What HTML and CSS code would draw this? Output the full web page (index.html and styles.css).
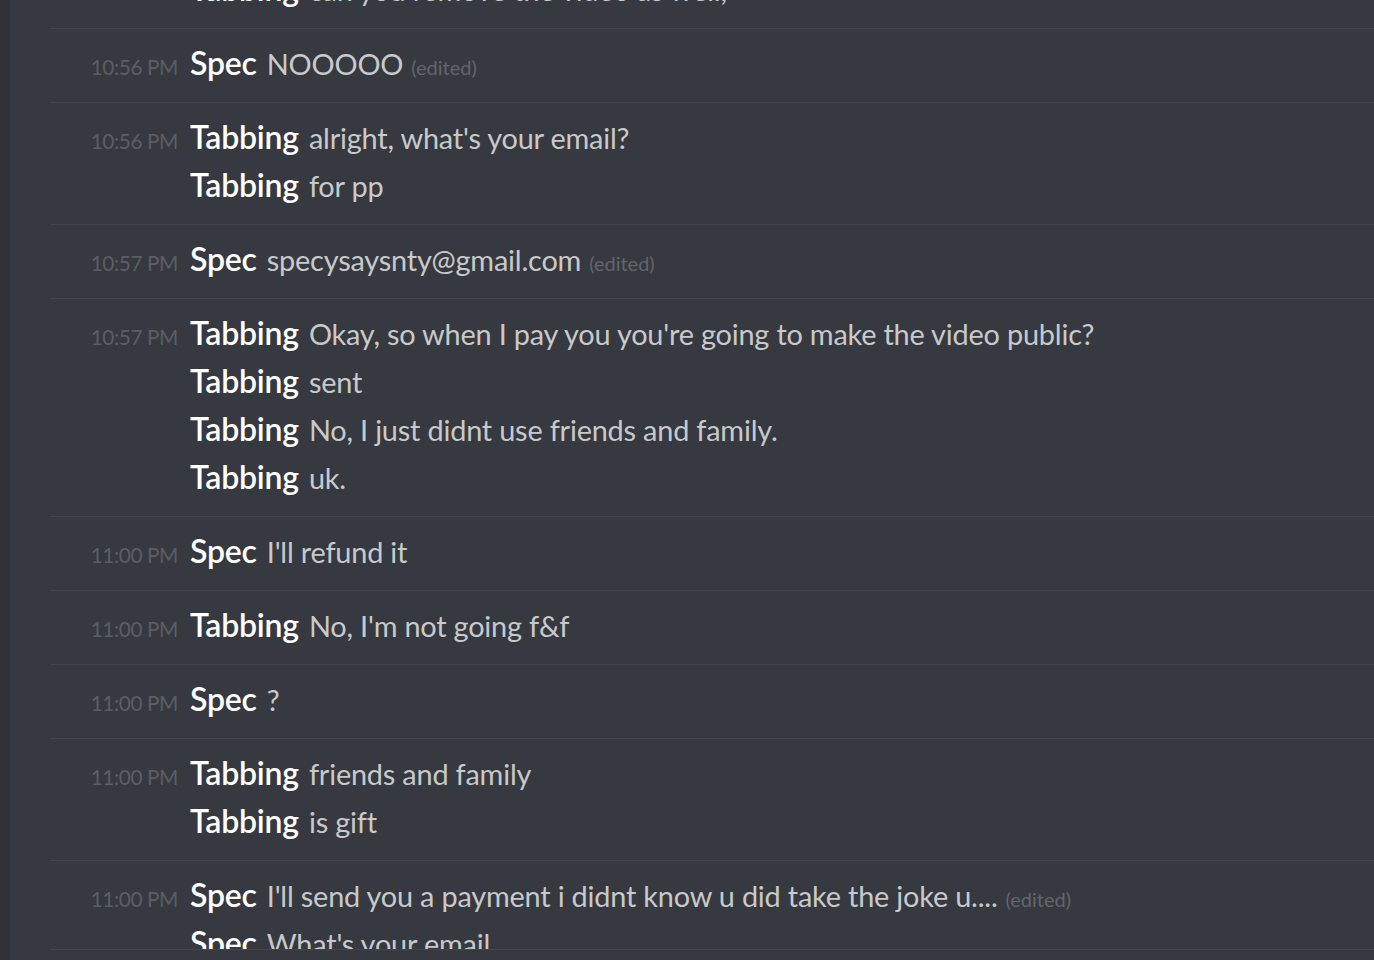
FILE: index.html
```html
<!DOCTYPE html>
<html>
<head>
<meta charset="utf-8">
<link rel="stylesheet" href="styles.css">
</head>
<body>
<div class="rail"></div>
<main class="chat">
  <section class="group">
    <div class="line"><span class="time"></span><span class="name">Tabbing</span><span class="text">can you remove the video as well,</span></div>
  </section>
  <section class="group">
    <div class="line"><span class="time">10:56 PM</span><span class="name">Spec</span><span class="text">NOOOOO</span><span class="edited">(edited)</span></div>
  </section>
  <section class="group">
    <div class="line"><span class="time">10:56 PM</span><span class="name">Tabbing</span><span class="text">alright, what's your email?</span></div>
    <div class="line"><span class="time"></span><span class="name">Tabbing</span><span class="text">for pp</span></div>
  </section>
  <section class="group">
    <div class="line"><span class="time">10:57 PM</span><span class="name">Spec</span><span class="text">specysaysnty@gmail.com</span><span class="edited">(edited)</span></div>
  </section>
  <section class="group">
    <div class="line"><span class="time">10:57 PM</span><span class="name">Tabbing</span><span class="text">Okay, so when I pay you you're going to make the video public?</span></div>
    <div class="line"><span class="time"></span><span class="name">Tabbing</span><span class="text">sent</span></div>
    <div class="line"><span class="time"></span><span class="name">Tabbing</span><span class="text">No, I just didnt use friends and family.</span></div>
    <div class="line"><span class="time"></span><span class="name">Tabbing</span><span class="text">uk.</span></div>
  </section>
  <section class="group">
    <div class="line"><span class="time">11:00 PM</span><span class="name">Spec</span><span class="text">I'll refund it</span></div>
  </section>
  <section class="group">
    <div class="line"><span class="time">11:00 PM</span><span class="name">Tabbing</span><span class="text">No, I'm not going f&amp;f</span></div>
  </section>
  <section class="group">
    <div class="line"><span class="time">11:00 PM</span><span class="name">Spec</span><span class="text">?</span></div>
  </section>
  <section class="group">
    <div class="line"><span class="time">11:00 PM</span><span class="name">Tabbing</span><span class="text">friends and family</span></div>
    <div class="line"><span class="time"></span><span class="name">Tabbing</span><span class="text">is gift</span></div>
  </section>
  <section class="group clip">
    <div class="line"><span class="time">11:00 PM</span><span class="name">Spec</span><span class="text">I'll send you a payment i didnt know u did take the joke u....</span><span class="edited">(edited)</span></div>
    <div class="line"><span class="time"></span><span class="name">Spec</span><span class="text">What's your email</span></div>
  </section>
</main>
</body>
</html>
```

FILE: styles.css
```css
html, body {
  margin: 0;
  padding: 0;
  height: 100%;
}

body {
  background: #36393f;
  display: flex;
  overflow: hidden;
  font-family: Lato, "Open Sans", sans-serif;
}

.rail {
  width: 10px;
  flex: none;
  background: #2f3136;
}

.chat {
  flex: 1;
  margin-top: -45px;
  padding-left: 40px;
}

.group {
  padding: 10px 0 15px;
  border-bottom: 1px solid #42454b;
}

.group.clip {
  height: 78px;
  overflow: hidden;
  padding-bottom: 0;
}

.line {
  display: flex;
  align-items: baseline;
  height: 48px;
  line-height: 48px;
  white-space: nowrap;
}

.time {
  width: 128px;
  flex: none;
  text-align: right;
  margin-right: 12px;
  font-size: 20.8px;
  color: #5b5e64;
  letter-spacing: -0.4px;
}

.name {
  font-size: 32px;
  font-weight: 600;
  color: #ffffff;
  margin-right: 10px;
  letter-spacing: -0.2px;
}

.text {
  font-size: 28.9px;
  color: #c8c9cb;
  letter-spacing: -0.2px;
}

.edited {
  font-size: 20px;
  color: #62656b;
  margin-left: 8px;
}
```
